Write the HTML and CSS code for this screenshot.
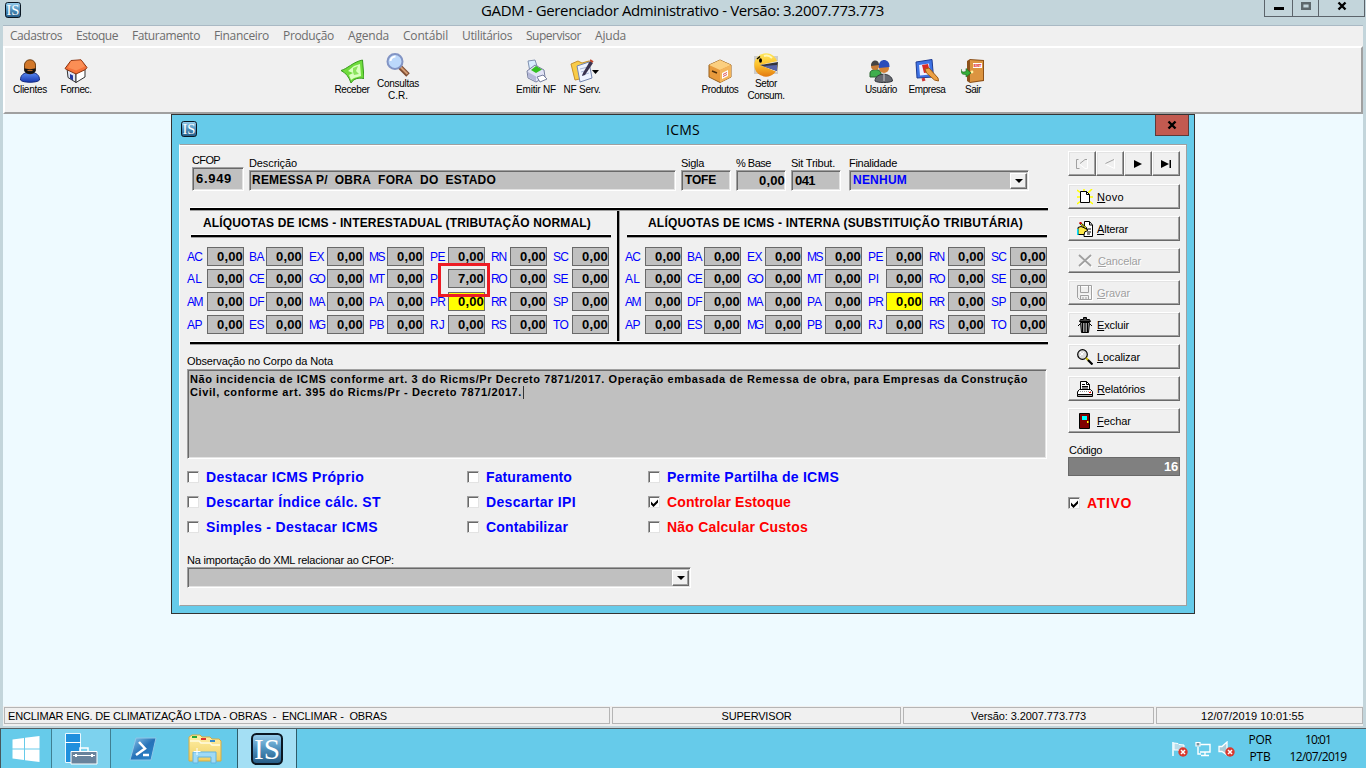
FILE: index.html
```html
<!DOCTYPE html>
<html lang="pt-BR">
<head>
<meta charset="utf-8">
<title>GADM - Gerenciador Administrativo</title>
<link rel="stylesheet" href="styles.css">
</head>
<body>
<svg class="defs" width="0" height="0">
  <defs>
    <linearGradient id="gLogo" x1="0" y1="0" x2="0" y2="1"><stop offset="0" stop-color="#9ad0ee"/><stop offset=".5" stop-color="#4d90bd"/><stop offset="1" stop-color="#245a84"/></linearGradient>
    <linearGradient id="gBlue" x1="0" y1="0" x2="0" y2="1"><stop offset="0" stop-color="#5a8cf5"/><stop offset="1" stop-color="#1737b0"/></linearGradient>
    <linearGradient id="gGold" x1="0" y1="0" x2="0" y2="1"><stop offset="0" stop-color="#ffe65a"/><stop offset=".5" stop-color="#fbc02c"/><stop offset="1" stop-color="#e37a10"/></linearGradient>
    <linearGradient id="gPs" x1="0" y1="0" x2="1" y2="1"><stop offset="0" stop-color="#8fc8ec"/><stop offset=".5" stop-color="#2672b8"/><stop offset="1" stop-color="#2a8ace"/></linearGradient>
    <linearGradient id="gFolder" x1="0" y1="0" x2="0" y2="1"><stop offset="0" stop-color="#fff0a8"/><stop offset="1" stop-color="#efcf62"/></linearGradient>
    <symbol id="logo" viewBox="0 0 32 32">
      <rect x="1" y="1" width="30" height="30" rx="4.5" fill="url(#gLogo)" stroke="#0b1722" stroke-width="2"/>
      <text x="16" y="26" text-anchor="middle" font-family="Liberation Serif, serif" font-size="30" textLength="26" lengthAdjust="spacingAndGlyphs" fill="#fff">IS</text>
    </symbol>
    <symbol id="err" viewBox="0 0 10 10"><circle cx="5" cy="5" r="4.7" fill="#d9392e"/><path d="M3 3l4 4M7 3l-4 4" stroke="#fff" stroke-width="1.5"/></symbol>
  </defs>
</svg>

<header class="titlebar">
  <svg class="app-icon" width="16" height="16"><use href="#logo"/></svg>
  <h1 class="app-title"><span data-w="403">GADM - Gerenciador Administrativo - Versão: 3.2007.773.773</span></h1>
  <div class="win-buttons">
    <span class="wb wb-min"><svg width="10" height="16"><path d="M0 7h10v3H0z"/></svg></span>
    <span class="wb wb-max"><svg width="10" height="16"><path d="M1.2 3.2h7.6v5.6H1.2z" fill="none" stroke="#5d676b" stroke-width="2.4"/></svg></span>
    <span class="wb wb-close"><svg width="10" height="16"><path d="M1.5 2.5l7 7M8.5 2.5l-7 7" stroke="#000" stroke-width="2.4"/></svg></span>
  </div>
</header>

<nav class="menubar">
  <span data-w="52">Cadastros</span><span data-w="42">Estoque</span><span data-w="68">Faturamento</span><span data-w="55">Financeiro</span><span data-w="51">Produção</span><span data-w="41">Agenda</span><span data-w="45">Contábil</span><span data-w="50">Utilitários</span><span data-w="55">Supervisor</span><span data-w="31">Ajuda</span>
</nav>

<div class="toolbar">
  <div class="tool"><svg width="24" height="24" viewBox="0 0 24 24"><path d="M2.500 21c0-5 3-7.500 9.500-7.500S21.500 16 21.500 21c-2 3-17 3-19 0z" fill="url(#gBlue)" stroke="#152a80"/><rect x="6.500" y=".8" width="11" height="14" rx="5.300" fill="#d2782a" stroke="#6e3d10"/><path d="M6.300 9c2 1.500 9 1.500 11.400 0v3c-1 4-10.400 4-11.400 0z" fill="#111"/><path d="M9.500 11.500h5" stroke="#b5692a" stroke-width="1.200"/></svg><span data-w="34">Clientes</span></div>
  <div class="tool"><svg width="24" height="24" viewBox="0 0 24 24"><path d="M3 9l9 4v10.500l-8-5z" fill="#dfe5f4" stroke="#333"/><path d="M12 13l9-5v10l-9 5.500z" fill="#fff" stroke="#333"/><path d="M1 9.500L7 1.500 17 .8 23 8.500l-1.500 2L12 15 2.500 10.500z" fill="#f4713a" stroke="#8a3410"/><path d="M7 2l10-.500 4 6-9 4-8-3z" fill="#fb8e55"/><path d="M6 15l3 1.500v5l-3-2z" fill="#2438a0"/></svg><span data-w="31">Fornec.</span></div>
  <div class="tool-gap gap-5"></div>
  <div class="tool"><svg width="24" height="24" viewBox="0 0 24 24"><path d="M1 11.500C7 10 13 3 22.500 1L24 19.500c-6-1-10 0-13 4.500C9 18 6 14 1 11.500z" fill="#6fdc3c" stroke="#379a1c"/><path d="M8 12l6-5 6-2 1 12-7 2-3 2-2-5 4-2z" fill="#d9ffbf"/><path d="M13 9l5-2-2 5 3 3-5 1-1-3z" fill="#8be35e"/></svg><span data-w="35">Receber</span></div>
  <div class="tool tall"><svg width="24" height="24" viewBox="0 0 24 24"><path d="M14 14l8 8" stroke="#7d4d33" stroke-width="5"/><path d="M14.500 14l7 7" stroke="#d29b72" stroke-width="2"/><circle cx="9" cy="8.500" r="7.500" fill="#bcd8fb" stroke="#8294c4" stroke-width="2"/><path d="M4.500 8a5 5 0 015-4.500" stroke="#fff" stroke-width="2" fill="none"/></svg><span data-w="42">Consultas</span><span data-w="20">C.R.</span></div>
  <div class="tool-gap gap-2"></div>
  <div class="tool"><svg width="24" height="24" viewBox="0 0 24 24"><path d="M4 2l7-1 3 9-8 3z" fill="#d8ecff" stroke="#8090b0"/><path d="M3 12l8-6 9 5 1 7-9 5-8-4z" fill="#e2e4f6" stroke="#7880a0"/><path d="M7 11l5-4 6 3.500L12 14z" fill="#32c020"/><path d="M4 13l8 4.500v5L4 18z" fill="#b4b8d8"/><path d="M13 18l6-2 4 4-7 3z" fill="#fff" stroke="#7880a0"/></svg><span data-w="40">Emitir NF</span></div>
  <div class="tool"><svg width="24" height="24" viewBox="0 0 24 24"><path d="M1 5l7-3 4 2 7-2v16L5 21z" fill="#f9cc48" stroke="#c8912a"/><path d="M7 7l12-4 3 16-12 4z" fill="#eef3ff" stroke="#7485b0"/><path d="M10 10l8-2M11 13l7-2M12 16l7-2" stroke="#aab7d8"/><path d="M20 2l-7 12-1 3 3-1L23 4z" fill="#3a3350"/><path d="M20 1l3 2" stroke="#c0442a" stroke-width="2"/></svg><span data-w="37">NF Serv.</span><svg class="drop" width="7" height="4"><path d="M0 0h7L3.500 4z"/></svg></div>
  <div class="tool-gap gap-2"></div>
  <div class="tool"><svg width="24" height="24" viewBox="0 0 24 24"><path d="M1 6l11-5 11 5v12l-11 5.500L1 18z" fill="#e89a3c" stroke="#98601c"/><path d="M1 6l11-5 11 5-11 5z" fill="#fbcf80"/><path d="M12 11l11-5v12l-11 5.500z" fill="#f3b55c"/><path d="M4 12l5 2" stroke="#4c2c08" stroke-width="1.500"/><path d="M14 14l6-3v6l-6 3z" fill="#fff"/><path d="M15 15.500l4-2m-4 4l4-2" stroke="#d55"/></svg><span data-w="37">Produtos</span></div>
  <div class="tool tall"><svg width="24" height="24" viewBox="0 0 24 24"><path d="M0 3h24v18H0z" fill="#ccc"/><circle cx="12" cy="12" r="11.700" fill="url(#gGold)"/><path d="M24 8L6 12l17 7z" fill="#efefef"/><path d="M24 9L6 12l17 6z" fill="#34343a"/><path d="M9 13l14-1v6z" fill="#5864a8"/><ellipse cx="6.500" cy="7.500" rx="1.500" ry="2.300"/><path d="M3 6l3-2.500" stroke="#000" stroke-width="1.300"/><path d="M10 3c3-1 6 0 8 2" stroke="#fff7b8" stroke-width="2" fill="none"/></svg><span data-w="22">Setor</span><span data-w="37">Consum.</span></div>
  <div class="tool-gap gap-half"></div>
  <div class="tool"><svg width="24" height="24" viewBox="0 0 24 24"><path d="M1 14c0-4 10-5 11 0v4H1z" fill="#3fae4c" stroke="#26632c"/><circle cx="6" cy="7" r="4" fill="#c87c35"/><path d="M2 7c0-7 8-7 8-1z" fill="#444"/><path d="M6 22c0-9 17-9 17.500 0-3 2-15 2-17.500 0z" fill="#66696f" stroke="#33363c"/><circle cx="15" cy="9" r="5" fill="#d28135"/><path d="M10 9C8-1 21-2 20.500 8z" fill="#2b4cba"/><path d="M15 15v7" stroke="#ccc"/></svg><span data-w="32">Usuário</span></div>
  <div class="tool"><svg width="24" height="24" viewBox="0 0 24 24"><path d="M1 3L17 .500 18.500 18 2 19z" fill="#3d72e4" stroke="#1e3b93"/><path d="M4 6l10-1.500 1 11L5 16.500z" fill="#eef"/><path d="M7 6l6-1 2 8-6 1z" fill="#d82a24"/><path d="M10 10l4-1 9 10 .500 3-4-1-8-7z" fill="#eda145" stroke="#9b5a14"/><path d="M7 21l3-1" stroke="#c33" stroke-width="3"/></svg><span data-w="37">Empresa</span></div>
  <div class="tool"><svg width="24" height="24" viewBox="0 0 24 24"><path d="M6 2l3-2 14 1v21l-14 2-3-2z" fill="#8d5119"/><path d="M9 1l13 1v19L9 23z" fill="#dc9440"/><path d="M12 4h9v5h-9z" fill="#fff"/><text x="12.400" y="8.300" font-family="Liberation Sans" font-size="4.300" font-weight="bold" fill="#d22" textLength="8">EXIT</text><circle cx="11" cy="13" r="1.400" fill="#fff2a0"/><path d="M0 10c0 3 2 3.500 5 2.500V9.500l5 4.500-5 4v-2.500C1 16-.500 14 0 10z" fill="#36ad38" stroke="#1a661c" stroke-width=".6"/></svg><span data-w="16">Sair</span></div>
</div>

<main class="desktop"></main>

<footer class="statusbar">
  <div class="st st-left"><span data-w="379">ENCLIMAR ENG. DE CLIMATIZAÇÃO LTDA - OBRAS&nbsp; -&nbsp; ENCLIMAR -&nbsp; OBRAS</span></div>
  <div class="st st-user"><span data-w="70">SUPERVISOR</span></div>
  <div class="st st-ver"><span data-w="115">Versão: 3.2007.773.773</span></div>
  <div class="st st-date"><span data-w="103">12/07/2019 10:01:55</span></div>
</footer>

<div class="taskbar">
  <div class="task start"><svg width="28" height="26" viewBox="0 0 28 26"><path d="M.5 3.500L12 2v10.500H.5zM13 1.800L27.500 0v12.500H13zM.5 13.500H12V24L.5 22.500zM13 13.500h14.500V26L13 24.200z" fill="#fff"/></svg></div>
  <div class="task lit"><svg width="34" height="34" viewBox="0 0 34 34"><path d="M1.500 1.500h15v29h-15z" fill="#1f8fdd" stroke="#e8f7ff"/><path d="M1 10.500h16" stroke="#fff"/><path d="M7 19.500h26V32H7z" fill="#69839c" stroke="#fff"/><path d="M16 19v-3h8v3" fill="none" stroke="#fff" stroke-width="1.500"/><path d="M9 23.500h22" stroke="#fff"/><path d="M12 22v3M28 22v3" stroke="#fff" stroke-width="2"/></svg></div>
  <div class="task"><svg width="28" height="26" viewBox="0 0 28 26"><path d="M7 2h20l-5 22H1z" fill="url(#gPs)" stroke="#8fc7e8"/><path d="M10 6l6 6.500L7 19M14 19h6" fill="none" stroke="#fff" stroke-width="2.500"/></svg></div>
  <div class="task"><svg width="34" height="30" viewBox="0 0 34 30"><path d="M1 3l3-2h8l2 2h8l2 2h7l2 2v20H1z" fill="url(#gFolder)" stroke="#d6ac45"/><path d="M4 2h5v2H4z" fill="#27a83a"/><path d="M13 4h5v2h-5z" fill="#d33"/><path d="M22 6h5v2h-5z" fill="#38c"/><path d="M2 7h9l2 2h9l2 2h8" fill="none" stroke="#fffbe0" stroke-width="1.500"/><path d="M5 29V18h23v11h-5v-6H10v6z" fill="#9edaf6" stroke="#61b4df"/><path d="M9 14v7M5.500 17.500h7" stroke="#fff"/></svg></div>
  <div class="task active"><svg width="32" height="32"><use href="#logo"/></svg></div>
  <div class="tray">
    <svg width="17" height="16" viewBox="0 0 17 16"><path d="M2 1v14" stroke="#fff" stroke-width="1.500"/><path d="M3 2l4 .5 1 1 5 .5v6H8L7 9H3z" fill="#b9dcea" stroke="#fff"/><use href="#err" x="7" y="6" width="10" height="10"/></svg>
    <svg width="16" height="16" viewBox="0 0 16 16"><path d="M5.500 3.500h9.500v7.500H5M10 11v3M6 14.500h8M3 6v7h3" fill="none" stroke="#fff" stroke-width="1.400"/><path d="M1 1.500h4V5H1z" fill="#7893a0" stroke="#fff" stroke-width="1.200"/></svg>
    <svg width="17" height="16" viewBox="0 0 17 16"><path d="M1 5.500h3L9 1v13L4 10.500H1z" fill="#a8ccd8" stroke="#fff" stroke-width="1.300"/><use href="#err" x="7" y="6" width="10" height="10"/></svg>
  </div>
  <div class="lang"><span data-w="23">POR</span><span data-w="21">PTB</span></div>
  <div class="clock"><span data-w="26">10:01</span><span data-w="57">12/07/2019</span></div>
</div>

<section class="dialog">
  <header class="dlg-title">
    <svg class="dlg-icon" width="16" height="16"><use href="#logo"/></svg>
    <h2><span data-w="34">ICMS</span></h2>
    <span class="dlg-close"><svg width="10" height="10"><path d="M1.500 1.500l7 7M8.500 1.500l-7 7" stroke="#000" stroke-width="2.400"/></svg></span>
  </header>
  <div class="client">
    <div class="form">
      <div class="fields">
        <div class="field f-cfop"><label data-w="28">CFOP</label><div class="input b"><span data-w="36">6.949</span></div></div>
        <div class="field f-desc"><label data-w="48">Descrição</label><div class="input b"><span data-w="244">REMESSA P/&nbsp; OBRA&nbsp; FORA&nbsp; DO&nbsp; ESTADO</span></div></div>
        <div class="field f-sigla"><label data-w="23">Sigla</label><div class="input b"><span data-w="31">TOFE</span></div></div>
        <div class="field f-base"><label data-w="35">% Base</label><div class="input b right"><span data-w="26">0,00</span></div></div>
        <div class="field f-sit"><label data-w="44">Sit Tribut.</label><div class="input b"><span data-w="20">041</span></div></div>
        <div class="field f-fin"><label data-w="48">Finalidade</label><div class="input b select blue"><span data-w="54">NENHUM</span><i class="sel-btn"></i></div></div>
      </div>

      <div class="rates">
        <div class="rule rule-top"></div>
        <div class="halves">
          <div class="half left"><h3><span data-w="388">ALÍQUOTAS DE ICMS - INTERESTADUAL (TRIBUTAÇÃO NORMAL)</span></h3><div class="rule"></div><div class="grid" data-pi="7,00"></div></div>
          <div class="divider"></div>
          <div class="half right-half"><h3><span data-w="375">ALÍQUOTAS DE ICMS - INTERNA (SUBSTITUIÇÃO TRIBUTÁRIA)</span></h3><div class="rule"></div><div class="grid" data-pi="0,00"></div></div>
        </div>
        <div class="rule rule-bottom"></div>
      </div>

      <label class="obs-label"><span data-w="146">Observação no Corpo da Nota</span></label>
      <div class="obs b"><p><span data-w="838">Não incidencia de ICMS conforme art. 3 do Ricms/Pr Decreto 7871/2017. Operação embasada de Remessa de obra, para Empresas da Construção</span></p><p><span data-w="332">Civil, conforme art. 395 do Ricms/Pr - Decreto 7871/2017.</span><i class="caret"></i></p></div>

      <div class="checks">
        <div class="chk"><i class="box"></i><span data-w="158">Destacar ICMS Próprio</span></div>
        <div class="chk"><i class="box"></i><span data-w="86">Faturamento</span></div>
        <div class="chk"><i class="box"></i><span data-w="172">Permite Partilha de ICMS</span></div>
        <div class="chk"><i class="box"></i><span data-w="175">Descartar Índice cálc. ST</span></div>
        <div class="chk"><i class="box"></i><span data-w="90">Descartar IPI</span></div>
        <div class="chk red"><i class="box"><svg width="8" height="8" viewBox="0 0 8 8"><path d="M0 2.500v3L2.500 8 7 3.500v-3L2.500 5z"/></svg></i><span data-w="124">Controlar Estoque</span></div>
        <div class="chk"><i class="box"></i><span data-w="172">Simples - Destacar ICMS</span></div>
        <div class="chk"><i class="box"></i><span data-w="82">Contabilizar</span></div>
        <div class="chk red"><i class="box"></i><span data-w="141">Não Calcular Custos</span></div>
      </div>

      <label class="xml-label"><span data-w="207">Na importação do XML relacionar ao CFOP:</span></label>
      <div class="input select xml"><i class="sel-btn"></i></div>
    </div>

    <aside class="side">
      <div class="navs">
        <span class="btn"><svg width="14" height="10"><path d="M4.500 9.500h-3V.500h2M12 .500h-2L5 4.500" fill="none" stroke="#a0a0a0"/><path d="M5 5.500l5 4h2.500v-9" fill="none" stroke="#fff"/></svg></span>
        <span class="btn"><svg width="12" height="10"><path d="M10 .500L1.500 4.500" fill="none" stroke="#a0a0a0"/><path d="M2 5.500l8.500 4v-9" fill="none" stroke="#fff"/></svg></span>
        <span class="btn"><svg width="8" height="8"><path d="M0 0l8 4-8 4z"/></svg></span>
        <span class="btn"><svg width="10" height="8"><path d="M0 0l8 4-8 4zM8.500 0H10v8H8.500z"/></svg></span>
      </div>
      <span class="btn cmd"><svg width="16" height="16" viewBox="0 0 16 16"><path d="M0 1l4 3M15 0l-4 4M0 8h3M13 8h3M0 15l4-3M16 15l-4-3M7 0v2" stroke="#ff0" stroke-width="1.500"/><path d="M3.500 2.500h6l3 3v8h-9z" fill="#fff" stroke="#000"/><path d="M9.500 2.500v3h3" fill="none" stroke="#000"/></svg><span data-w="27"><u>N</u>ovo</span></span>
      <span class="btn cmd"><svg width="16" height="16" viewBox="0 0 16 16"><path d="M7.500.500h5l3 3.500v11.500H7z" fill="#fff" stroke="#000"/><path d="M12.500 1v3H15M11 8h3M10 11h4M10 13h3" fill="none" stroke="#000"/><path d="M1 6.500l3-1 5 2 2 1.500-2 1.500H8l-1 3H1z" fill="#ffe94a" stroke="#000"/><path d="M3 2l7 6" stroke="#000" stroke-width="2"/><path d="M4 3l5 4" stroke="#ff0"/><path d="M2.500 1h2v2h-2z" fill="#d00"/><path d="M0 8h1.500v6H0z" fill="#0df"/></svg><span data-w="31"><u>A</u>lterar</span></span>
      <span class="btn cmd off"><svg width="16" height="16" viewBox="0 0 16 16"><path d="M3 3l12 11M14 3L3 14" stroke="#fff" stroke-width="2"/><path d="M2 2l12 11M14 2L2 13" stroke="#a0a0a0" stroke-width="1.800"/></svg><span class="shift" data-w="43"><u>C</u>ancelar</span></span>
      <span class="btn cmd off"><svg width="16" height="16" viewBox="0 0 16 16"><path d="M1.500 1.500h14v14h-13M4 10h9v5" fill="none" stroke="#fff"/><path d="M.5.500h14v14h-12l-2-2zM3.500.500v7h8v-7M3.500 14V10.500h8V14M6 12v2M9 12v2" fill="none" stroke="#a0a0a0"/></svg><span data-w="33"><u>G</u>ravar</span></span>
      <span class="btn cmd"><svg width="16" height="16" viewBox="0 0 16 16"><path d="M6.500.5h3v2h3l1 2h-11l1-2h3z" fill="#444" stroke="#000"/><path d="M3.500 5.500h9l-1 10h-7z" fill="#999" stroke="#000"/><path d="M5.500 6v9M8 6v9M10.500 6v9M1 9l2-2M15 9l-2-2" stroke="#000"/></svg><span data-w="32"><u>E</u>xcluir</span></span>
      <span class="btn cmd"><svg width="16" height="16" viewBox="0 0 16 16"><circle cx="5.500" cy="5.500" r="4.800" fill="#ddd" stroke="#000" stroke-width="1.200"/><path d="M3 3l3 3M3 7l4-4" stroke="#fff"/><path d="M9 9l2.500 2.500" stroke="#c8b800" stroke-width="2"/><path d="M11 11l4.500 4.500" stroke="#000" stroke-width="2.200"/></svg><span data-w="43"><u>L</u>ocalizar</span></span>
      <span class="btn cmd"><svg width="16" height="16" viewBox="0 0 16 16"><path d="M3.500 8V.500h6l3 3V8" fill="#fff" stroke="#000"/><path d="M9.500.500v3h3M5 3.500h3M5 5.500h6M5 7h6" fill="none" stroke="#000"/><path d="M2.500 8.500h11l2 2v3H.5v-3z" fill="#fff" stroke="#000"/><path d="M1 10.500h14" stroke="#999" stroke-dasharray="1 1"/><path d="M.5 13.500h15v2H.5z" fill="#aaa" stroke="#000"/><path d="M12 11h2v1h-2z" fill="red"/></svg><span data-w="48"><u>R</u>elatórios</span></span>
      <span class="btn cmd"><svg width="16" height="16" viewBox="0 0 16 16"><path d="M2.500.500h10v15h-10z" fill="#800000" stroke="#000"/><path d="M5 3h5v4H5z" fill="#0ff"/><path d="M10 8h1.500v2H10z" fill="#ff0"/></svg><span data-w="34"><u>F</u>echar</span></span>
      <label class="cod-label"><span data-w="33">Código</span></label>
      <div class="code b"><span data-w="14">16</span></div>
      <div class="chk red ativo"><i class="box"><svg width="8" height="8" viewBox="0 0 8 8"><path d="M0 2.500v3L2.500 8 7 3.500v-3L2.500 5z"/></svg></i><span data-w="45">ATIVO</span></div>
    </aside>
  </div>
  <div class="highlight"></div>
</section>
<script src="app.js"></script>
</body>
</html>
```
FILE: styles.css
```css
* { box-sizing: border-box; }
body { margin: 0; width: 1366px; height: 768px; position: relative; overflow: hidden; display: flex; flex-direction: column; background: #c3d5db; font: 11px/13px "Liberation Sans", Arial, sans-serif; color: #000; }
svg { display: block; flex: none; }
.defs { position: absolute; }
h1, h2, h3, p { margin: 0; font-weight: inherit; }
span { white-space: nowrap; }
.b { font-weight: bold; }

.titlebar { height: 25px; flex: none; display: flex; align-items: flex-start; padding-left: 5px; }
.app-icon { margin-top: 2px; }
.app-title { flex: 1; margin-left: 80px; text-align: center; font: 15px/20px "Open Sans", "Noto Sans", sans-serif; padding-top: 0; }
.win-buttons { display: flex; height: 17px; border: 1px solid #5c646b; border-top: 0; margin-right: 1px; }
.wb { display: flex; justify-content: center; height: 16px; }
.wb-min { width: 27px; }
.wb-max { width: 27px; border-left: 1px solid #5c646b; border-right: 1px solid #5c646b; }
.wb-close { width: 45px; }

.menubar { height: 21px; flex: none; margin: 0 3px; padding-left: 7px; border-top: 1px solid #a9b9c4; background: #f0f0f0; color: #6d6d6d; font: 12px/20px "Open Sans", "Noto Sans", sans-serif; display: flex; gap: 14px; }

.toolbar { height: 68px; flex: none; margin: 0 3px; padding: 0 2px; background: #f0f0f0; border: 2px solid; border-color: #fff #a0a0a0 #a0a0a0 #fff; display: flex; }
.tool { width: 46px; display: flex; flex-direction: column; align-items: center; padding-top: 11px; font-size: 10px; line-height: 12px; position: relative; }
.tool svg { margin-bottom: 1px; }
.tool.tall { padding-top: 5px; }
.tool .drop { position: absolute; left: 33px; top: 22px; }
.gap-5 { width: 230px; }
.gap-2 { width: 92px; }
.gap-half { width: 69px; }

.desktop { flex: 1; margin: 0 3px; background: #eefaff; }

.statusbar { height: 22px; flex: none; margin: 0 3px; padding: 1px 0 2px 1px; background: #f0f0f0; display: flex; gap: 2px; border-bottom: 2px solid #c3d5db; }
.st { border: 1px solid #b5b5b5; display: flex; align-items: center; justify-content: center; padding-top: 1px; }
.st-left { width: 606px; justify-content: flex-start; padding-left: 3px; }
.st-user { width: 289px; }
.st-ver { width: 251px; }
.st-date { width: 207px; padding-right: 14px; }

.taskbar { height: 40px; flex: none; background: #66cbea; border-top: 1px solid #555f63; display: flex; }
.task { width: 62px; display: flex; align-items: center; justify-content: center; }
.task.start { width: 51px; border-left: 1px solid #47575c; padding-right: 1px; }
.task.lit { width: 60px; border: solid #3f7f92; border-width: 0 1px; background: #7dd2ee; margin-right: 1px; }
.task.active { width: 60px; margin-left: 1px; border: solid #2f5c69; border-width: 0 1px; background: #a4dff4; }
.tray { display: flex; gap: 7px; align-items: center; margin-left: auto; }
.lang, .clock { display: flex; flex-direction: column; align-items: center; padding-top: 2px; font: 12px/17px "Open Sans", "Noto Sans", sans-serif; }
.lang { width: 24px; margin-left: 13px; }
.clock { width: 60px; margin: 0 18px 0 16px; }

.dialog { position: absolute; left: 171px; top: 114px; width: 1024px; height: 500px; background: #66cbea; border: 1px solid #333; display: flex; flex-direction: column; }
.dlg-title { height: 29px; flex: none; display: flex; align-items: flex-start; padding-left: 9px; }
.dlg-icon { margin-top: 6px; }
.dlg-title h2 { flex: 1; margin-left: 14px; text-align: center; font: 14px/20px "Open Sans", "Noto Sans", sans-serif; padding-top: 5px; }
.dlg-close { width: 34px; height: 21px; margin-right: 5px; background: #c25a50; border: 1px solid #5d3a3a; border-top: 0; display: flex; align-items: center; justify-content: center; }
.client { flex: 1; margin: 0 7px 7px; background: #f0f0f0; border: 1px solid #a0a0a0; border-left-color: #fff; display: flex; box-shadow: inset 0 1px #fff; }

.form { width: 861px; margin-left: 7px; padding-top: 8px; }
.fields { height: 38px; display: flex; align-items: flex-end; padding-left: 5px; }
.field { display: flex; flex-direction: column; align-items: flex-start; }
.field label { white-space: nowrap; line-height: 14px; }
.input { width: 100%; height: 21px; background: #c0c0c0; border: 1px solid; border-color: #a0a0a0 #fff #fff #a0a0a0; box-shadow: inset 1px 1px #696969, inset -1px -1px #e3e3e3; padding: 2px 3px; line-height: 15px; font-size: 12px; }
.f-cfop { width: 52px; margin-right: 5px; }
.f-cfop .input { height: 24px; padding-top: 3px; font-size: 13px; }
.f-desc { width: 427px; margin-right: 5px; }
.f-desc .input { padding-left: 2px; }
.f-sigla { width: 50px; margin-right: 5px; }
.f-base { width: 50px; margin-right: 5px; }
.f-sit { width: 50px; margin-right: 8px; }
.f-fin { width: 180px; }
.f-base .input, .f-sit .input { font-size: 13px; line-height: 16px; }
.input.right { text-align: right; padding-right: 0; }
.blue { color: #00f; }
.select { display: flex; justify-content: space-between; padding: 2px 1px 2px 3px; }
.sel-btn { width: 17px; height: 16px; margin-left: auto; background: #f0f0f0; border: 1px solid; border-color: #fff #696969 #696969 #fff; box-shadow: inset -1px -1px #a0a0a0; display: flex; align-items: center; justify-content: center; }
.sel-btn::after { content: ""; border: 4px solid transparent; border-top-color: #000; border-bottom: 0; }

.rates { margin-top: 16px; }
.rule { height: 4px; border-top: 1px solid #fff; border-bottom: 1px solid #a0a0a0; background: #000; }
.rule-top, .rule-bottom { margin-left: 3px; }
.halves { display: flex; height: 130px; }
.half.left { width: 430px; }
.right-half { width: 428px; padding-left: 5px; }
.divider { width: 3px; background: #000; border-right: 1px solid #a0a0a0; }
.half h3 { height: 23px; line-height: 24px; font-weight: bold; font-size: 12px; padding-left: 16px; }
.right-half h3 { padding-left: 23px; }
.half .rule { width: 420px; margin-left: 4px; }
.right-half .rule { margin-left: 2px; }
.grid { display: grid; grid-template-columns: 20px 42px 17px 43px 18px 42px 18px 43px 18px 43px 19px 43px 19px 37px; grid-template-rows: 22px 23px 23px 19px; margin-top: 9px; font-size: 12px; width: 422px; }
.uf { color: #00f; line-height: 20px; }
.rate { width: 37px; height: 19px; background: #c0c0c0; border: 1px solid #696969; font-weight: bold; font-size: 13px; text-align: right; padding-right: 0; line-height: 17px; }
.rate.home { background: #ff0; }
.highlight { position: absolute; left: 266px; top: 148px; width: 52px; height: 34px; border: 3px solid #ed1c24; }

.obs-label { display: block; margin-top: 9px; height: 15px; line-height: 14px; }
.obs { width: 860px; height: 90px; background: #c0c0c0; border: 1px solid; border-color: #a0a0a0 #fff #fff #a0a0a0; box-shadow: inset 1px 1px #696969, inset -1px -1px #e3e3e3; padding: 3px 2px; }
.obs p { display: flex; height: 13px; }
.caret { width: 1px; height: 13px; background: #333; margin-left: 1px; }

.checks { display: grid; grid-template-columns: 280px 181px 300px; grid-auto-rows: 25px; margin-top: 6px; }
.chk { display: flex; align-items: center; gap: 7px; color: #00f; font-weight: bold; font-size: 14px; line-height: 17px; }
.chk.red { color: #f00; }
.box { width: 12px; height: 12px; margin-bottom: 2px; flex: none; background: #fff; border: 1px solid; border-color: #a0a0a0 #e3e3e3 #e3e3e3 #a0a0a0; box-shadow: inset 1px 1px #696969; padding: 2px; }
.xml-label { display: block; margin-top: 13px; height: 15px; line-height: 15px; }
.xml { width: 504px; height: 21px; margin-top: -1px; }

.side { width: 112px; margin-left: 20px; padding-top: 6px; display: flex; flex-direction: column; }
.navs { display: flex; margin-bottom: 8px; }
.btn { width: 28px; height: 25px; background: #f0f0f0; border: 1px solid; border-color: #fff #696969 #696969 #fff; box-shadow: inset -1px -1px #a0a0a0, inset 1px 1px #e3e3e3; display: flex; align-items: center; justify-content: center; }
.btn.cmd { width: 112px; justify-content: flex-start; padding-left: 8px; gap: 4px; margin-bottom: 7px; }
.btn.cmd span { padding-top: 2px; }
.btn.cmd .shift { margin-left: 1px; }
.off { color: #a0a0a0; text-shadow: 1px 1px #fff; }
.cod-label { height: 14px; margin-top: 3px; padding-left: 1px; line-height: 14px; }
.code { height: 19px; background: #808080; border: 1px solid #696969; color: #fff; font-size: 13px; line-height: 17px; text-align: right; padding-right: 1px; }
.ativo { margin-top: 19px; }
```
FILE: app.js
```js
// Federal units in reading order, seven per row.
const units = [
  'AC', 'BA', 'EX', 'MS', 'PE', 'RN', 'SC',
  'AL', 'CE', 'GO', 'MT', 'PI', 'RO', 'SE',
  'AM', 'DF', 'MA', 'PA', 'PR', 'RR', 'SP',
  'AP', 'ES', 'MG', 'PB', 'RJ', 'RS', 'TO'
];
document.querySelectorAll('.grid').forEach(grid => {
  grid.innerHTML = units.map(uf => {
    const value = uf === 'PI' ? grid.dataset.pi : '0,00';
    const home = uf === 'PR' ? ' home' : '';
    const width = uf === 'PI' ? 11 : 15;
    return `<div class="uf"><span data-w="${width}">${uf}</span></div><div class="rate${home}"><span data-w="26">${value}</span></div>`;
  }).join('');
});

// Track each caption to its nominal width.
document.querySelectorAll('[data-w]').forEach(el => {
  const range = document.createRange();
  range.selectNodeContents(el);
  const natural = range.getBoundingClientRect().width;
  const spacing = (Number(el.dataset.w) - natural) / el.textContent.length;
  el.style.letterSpacing = spacing.toFixed(3) + 'px';
});
```
